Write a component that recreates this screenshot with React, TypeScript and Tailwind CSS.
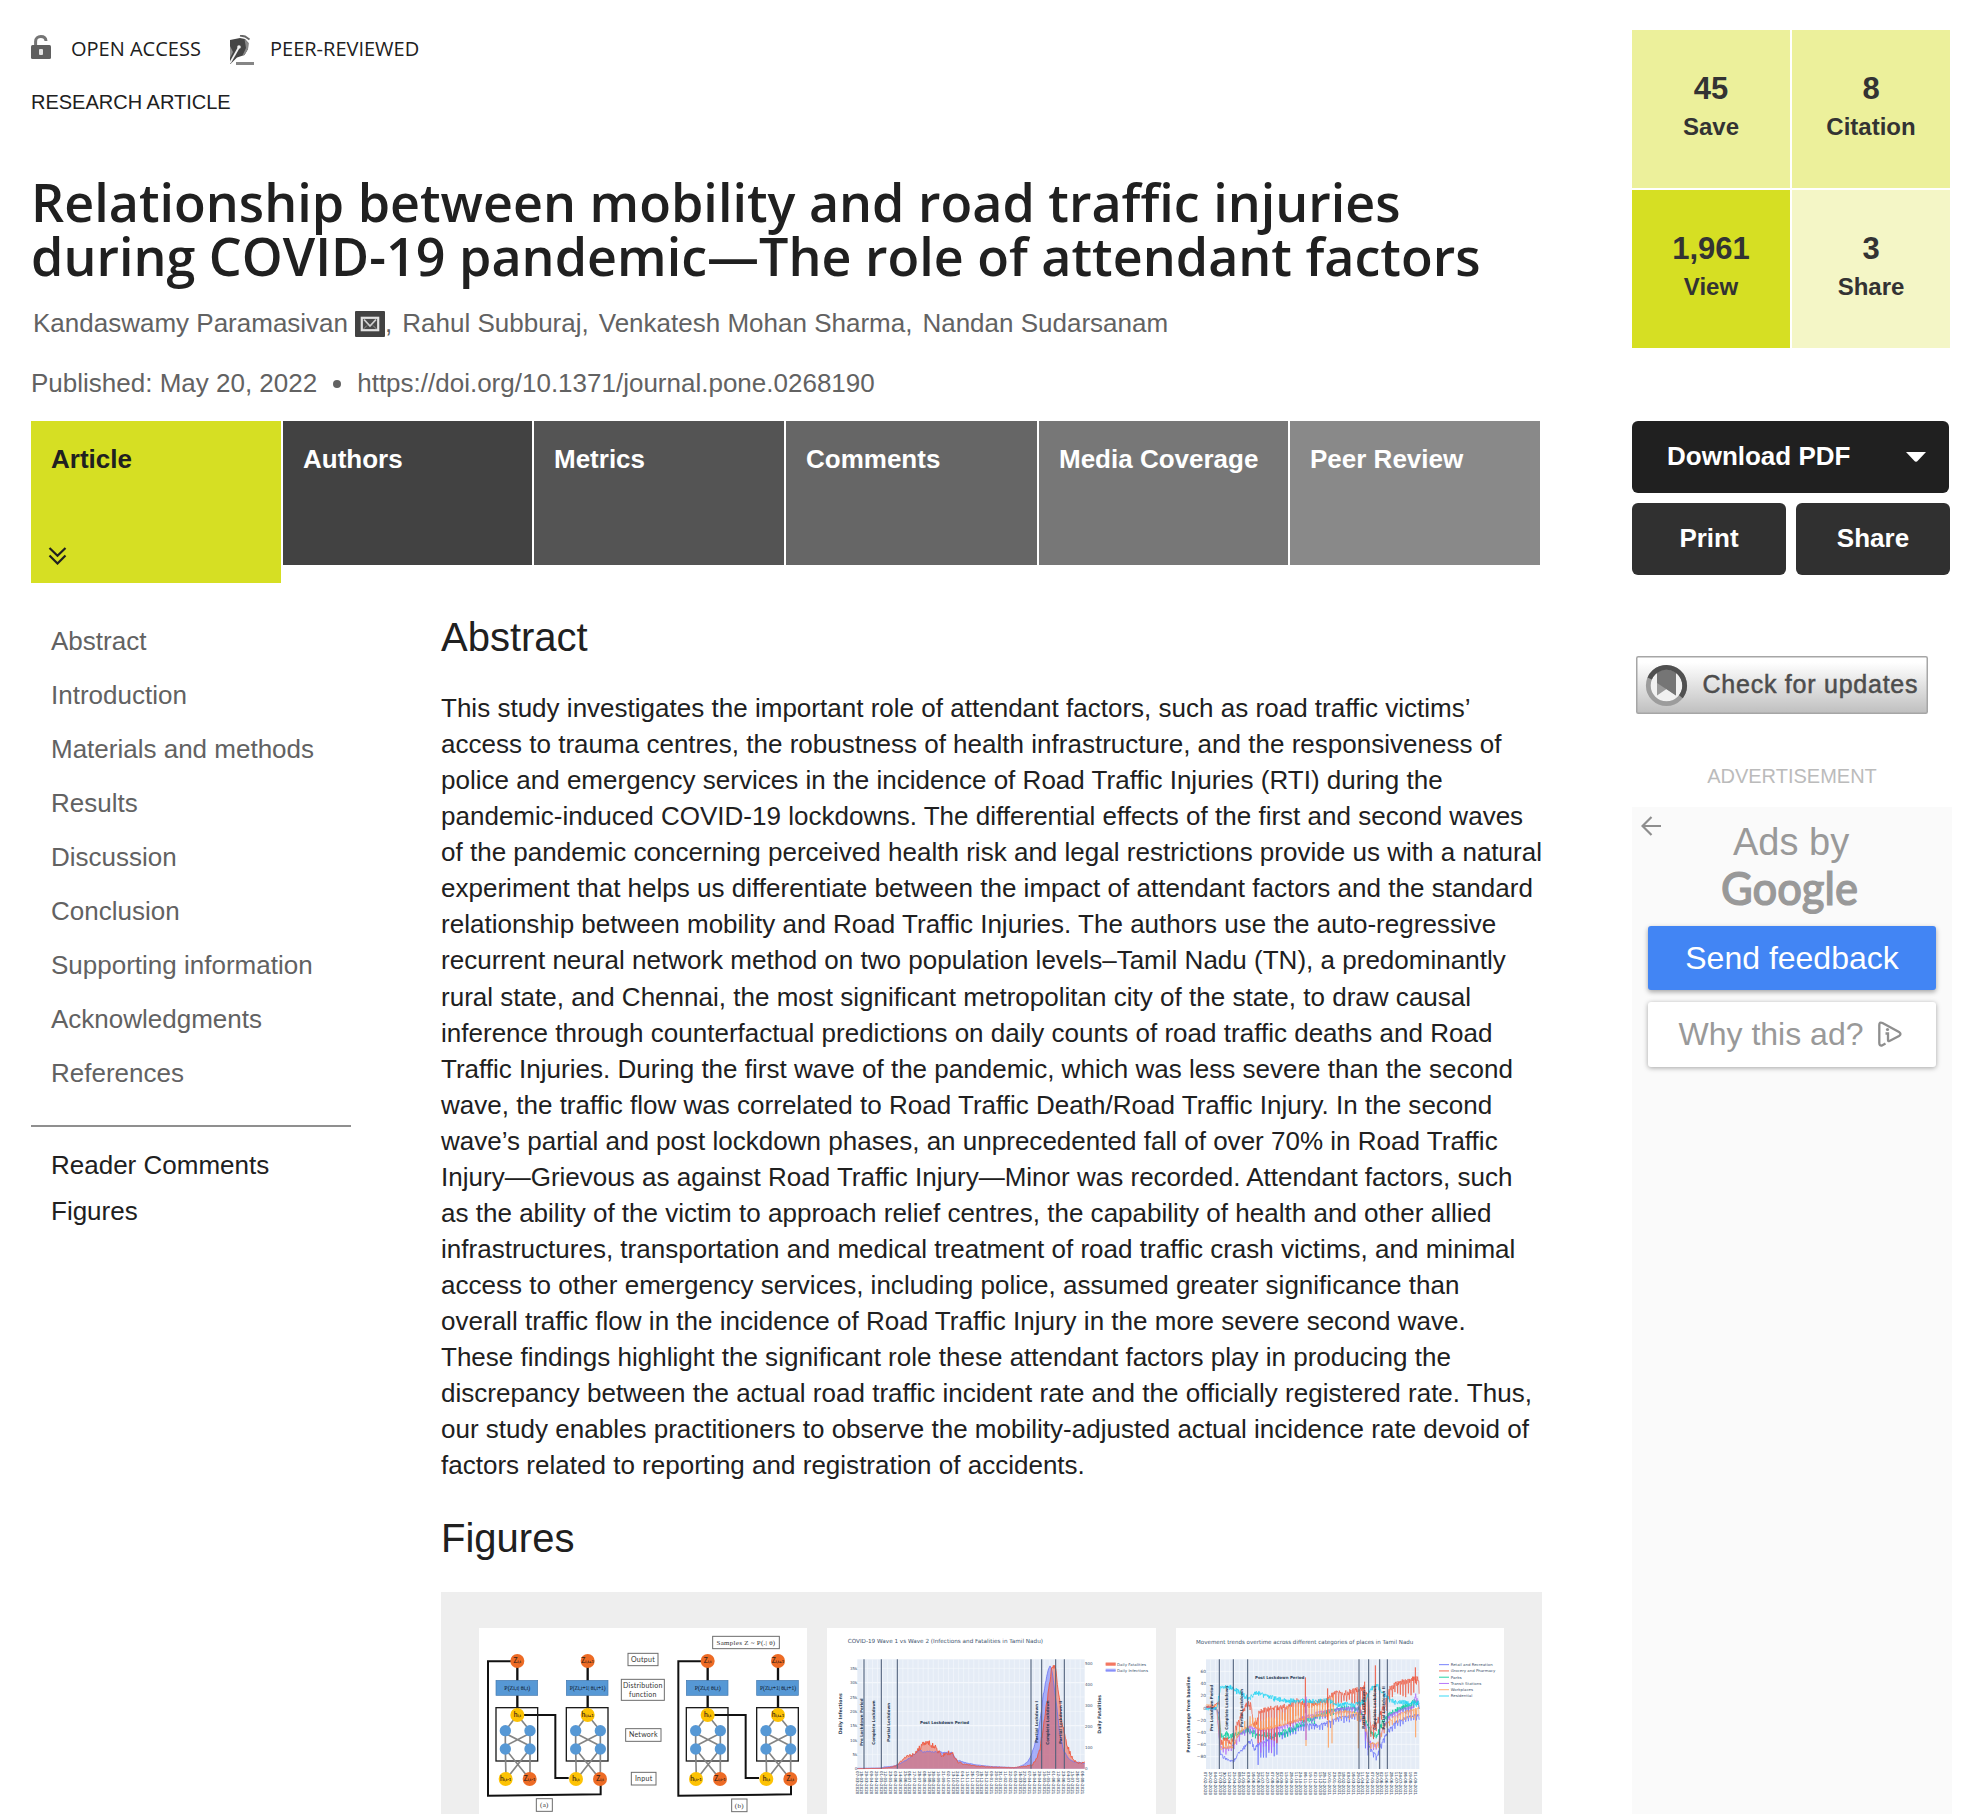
import React from "react";

type Pt = [number, number];

const SANS = "font-['Liberation_Sans',Arial,sans-serif]";

/* ---------- data ---------- */

const tabs = [
  { label: "Article", cls: "h-[162px] w-[250px] bg-[#d6df23] text-[#202020]" },
  { label: "Authors", cls: "h-[144px] w-[249px] bg-[#424242] text-white" },
  { label: "Metrics", cls: "h-[144px] w-[250px] bg-[#545454] text-white" },
  { label: "Comments", cls: "h-[144px] w-[251px] bg-[#666666] text-white" },
  { label: "Media Coverage", cls: "h-[144px] w-[249px] bg-[#777777] text-white" },
  { label: "Peer Review", cls: "h-[144px] w-[250px] bg-[#898989] text-white" },
];

const sections = [
  "Abstract",
  "Introduction",
  "Materials and methods",
  "Results",
  "Discussion",
  "Conclusion",
  "Supporting information",
  "Acknowledgments",
  "References",
];

const metrics = [
  { value: "45", label: "Save", cls: "bg-[#ecf09b]" },
  { value: "8", label: "Citation", cls: "bg-[#ecf09b]" },
  { value: "1,961", label: "View", cls: "bg-[#d6df23]" },
  { value: "3", label: "Share", cls: "bg-[#f4f6c6]" },
];

const abstractLines = [
  "This study investigates the important role of attendant factors, such as road traffic victims’",
  "access to trauma centres, the robustness of health infrastructure, and the responsiveness of",
  "police and emergency services in the incidence of Road Traffic Injuries (RTI) during the",
  "pandemic-induced COVID-19 lockdowns. The differential effects of the first and second waves",
  "of the pandemic concerning perceived health risk and legal restrictions provide us with a natural",
  "experiment that helps us differentiate between the impact of attendant factors and the standard",
  "relationship between mobility and Road Traffic Injuries. The authors use the auto-regressive",
  "recurrent neural network method on two population levels–Tamil Nadu (TN), a predominantly",
  "rural state, and Chennai, the most significant metropolitan city of the state, to draw causal",
  "inference through counterfactual predictions on daily counts of road traffic deaths and Road",
  "Traffic Injuries. During the first wave of the pandemic, which was less severe than the second",
  "wave, the traffic flow was correlated to Road Traffic Death/Road Traffic Injury. In the second",
  "wave’s partial and post lockdown phases, an unprecedented fall of over 70% in Road Traffic",
  "Injury—Grievous as against Road Traffic Injury—Minor was recorded. Attendant factors, such",
  "as the ability of the victim to approach relief centres, the capability of health and other allied",
  "infrastructures, transportation and medical treatment of road traffic crash victims, and minimal",
  "access to other emergency services, including police, assumed greater significance than",
  "overall traffic flow in the incidence of Road Traffic Injury in the more severe second wave.",
  "These findings highlight the significant role these attendant factors play in producing the",
  "discrepancy between the actual road traffic incident rate and the officially registered rate. Thus,",
  "our study enables practitioners to observe the mobility-adjusted actual incidence rate devoid of",
  "factors related to reporting and registration of accidents.",
];

/* ---------- chart helpers ---------- */

const noise = (i: number, seed: number) => {
  const v = Math.sin(i * 127.1 + seed * 311.7) * 43758.5453;
  return (v - Math.floor(v)) * 2 - 1;
};

const interp = (pts: Pt[], x: number) => {
  for (let i = 1; i < pts.length; i++) {
    if (x <= pts[i][0]) {
      const [x0, y0] = pts[i - 1];
      const [x1, y1] = pts[i];
      return y0 + ((y1 - y0) * (x - x0)) / (x1 - x0 || 1);
    }
  }
  return pts[pts.length - 1][1];
};

const range = (a: number, b: number, step: number) => {
  const out: number[] = [];
  for (let x = a; x <= b; x += step) out.push(x);
  return out;
};

const toPath = (pts: Pt[]) => pts.map(([x, y], i) => `${i ? "L" : "M"}${x.toFixed(1)} ${y.toFixed(1)}`).join("");

/* ---------- figure 1: network diagram ---------- */

function Node({ cx, cy, fill, s }: { cx: number; cy: number; fill: string; s?: string }) {
  return (
    <g>
      <circle cx={cx} cy={cy} r={s ? 21 : 17} fill={fill} />
      {s && (
        <text x={cx} y={cy + 7} fontSize="20" textAnchor="middle" fill="#3d2415" stroke="#3d2415" strokeWidth="0.4" fontFamily="Lato, sans-serif">
          {s[0]}
          <tspan fontSize="13">{s.slice(1)}</tspan>
        </text>
      )}
    </g>
  );
}

function Unit({ ox, out, dist, h, a, b }: { ox: number; out: string; dist: string; h: string; a: string; b: string }) {
  return (
    <g>
      <path d={`M${ox + 64} 245V400`} stroke="#111" strokeWidth="7" />
      <rect x={ox} y="383" width="125" height="160" fill="none" stroke="#1c1c1c" strokeWidth="4" />
      <path
        d={`M${ox + 64} 405L${ox + 28} 452M${ox + 64} 405L${ox + 102} 452M${ox + 28} 452V507L${ox + 30} 596M${ox + 102} 452V596M${ox + 28} 498L${ox + 102} 460M${ox + 28} 460L${ox + 102} 498M${ox + 28} 507L${ox + 100} 596M${ox + 102} 507L${ox + 32} 596`}
        fill="none"
        stroke="#858585"
        strokeWidth="5"
      />
      <Node cx={ox + 64} cy={243} fill="#ed6b25" s={out} />
      <rect x={ox} y="301" width="125" height="45" fill="#5698d5" stroke="#4479ae" strokeWidth="2" />
      <text x={ox + 64} y="330" fontSize="20" textAnchor="middle" textLength={dist.length > 13 ? 108 : 78} lengthAdjust="spacingAndGlyphs" fill="#14263a" stroke="#14263a" strokeWidth="0.2" fontFamily="'Liberation Serif', serif">
        {dist}
      </text>
      <Node cx={ox + 64} cy={405} fill="#fdc204" s={h} />
      <Node cx={ox + 28} cy={452} fill="#5698d5" />
      <Node cx={ox + 102} cy={452} fill="#5698d5" />
      <Node cx={ox + 28} cy={507} fill="#5698d5" />
      <Node cx={ox + 102} cy={507} fill="#5698d5" />
      <Node cx={ox + 29} cy={597} fill="#fdc204" s={a} />
      <Node cx={ox + 101} cy={597} fill="#ed6b25" s={b} />
    </g>
  );
}

function Network({ x }: { x: number }) {
  return (
    <g>
      <path d={`M${x + 64} 244H${x - 24}V647L${x + 314} 643V597`} fill="none" stroke="#111" strokeWidth="6" />
      <path d={`M${x + 64} 405H${x + 178}V594H${x + 218}`} fill="none" stroke="#111" strokeWidth="6" />
      <Unit ox={x} out="Zi,t" dist="P(Zi,t| θi,t)" h="hi,t" a="hi,t-1" b="Zi,t-1" />
      <Unit ox={x + 211} out="Zi,t+1" dist="P(Zi,t+1| θi,t+1)" h="hi,t+1" a="hi,t" b="Zi,t" />
    </g>
  );
}

function Boxed({ x, y, w, h, lines, serif }: { x: number; y: number; w: number; h: number; lines: string[]; serif?: boolean }) {
  return (
    <g>
      <rect x={x} y={y} width={w} height={h} fill="#fff" stroke="#6c6c6c" strokeWidth="3" />
      {lines.map((l, i) => (
        <text
          key={l}
          x={x + w / 2}
          y={y + h / 2 + 7 + (i - (lines.length - 1) / 2) * 28}
          fontSize="21"
          textAnchor="middle"
          fill="#333"
          fontFamily={serif ? "'Liberation Serif', serif" : "Lato, sans-serif"}
          letterSpacing="0.8"
        >
          {l}
        </text>
      ))}
    </g>
  );
}

function NetworkFigure() {
  return (
    <svg viewBox="117 144 984 558" className="block h-[186px] w-[328px] bg-white">
      <Network x={168} />
      <Network x={739} />
      <Boxed x={818} y={169} w={200} h={37} lines={["Samples  Z ~ P(.| θ)"]} serif />
      <Boxed x={564} y={220} w={90} h={37} lines={["Output"]} />
      <Boxed x={544} y={298} w={129} h={63} lines={["Distribution", "function"]} />
      <Boxed x={557} y={446} w={106} h={38} lines={["Network"]} />
      <Boxed x={574} y={577} w={74} h={38} lines={["Input"]} />
      <Boxed x={289} y={656} w={48} h={38} lines={["(a)"]} serif />
      <Boxed x={875} y={657} w={46} h={38} lines={["(b)"]} serif />
    </svg>
  );
}

/* ---------- shared plot parts ---------- */

function Tag({ x, y, size, len, children, color = "#42546e", bold, anchor = "start" }: { x: number; y: number; size: number; len?: number; children: string; color?: string; bold?: boolean; anchor?: "start" | "middle" | "end" }) {
  return (
    <text x={x} y={y} fontSize={size} textLength={len} lengthAdjust="spacingAndGlyphs" fill={color} fontWeight={bold ? 700 : 400} textAnchor={anchor} fontFamily="'DejaVu Sans', sans-serif">
      {children}
    </text>
  );
}

function VTag({ x, y, len, children, color = "#2c3d57", size = 14, bold = true }: { x: number; y: number; len: number; children: string; color?: string; size?: number; bold?: boolean }) {
  return (
    <text transform={`translate(${x} ${y}) rotate(-90)`} fontSize={size} textLength={len} lengthAdjust="spacingAndGlyphs" fill={color} fontWeight={bold ? 700 : 400} fontFamily="'DejaVu Sans', sans-serif">
      {children}
    </text>
  );
}

function DateTicks({ x0, x1, count, y, startMonth, stepDays }: { x0: number; x1: number; count: number; y: number; startMonth: number; stepDays: number }) {
  return (
    <g>
      {range(0, count - 1, 1).map((i) => {
        const d = new Date(Date.UTC(2020, startMonth, 7 + i * stepDays));
        const s = `${String(d.getUTCDate()).padStart(2, "0")}-${String(d.getUTCMonth() + 1).padStart(2, "0")}-${d.getUTCFullYear()}`;
        return (
          <text key={i} transform={`translate(${x0 + ((x1 - x0) * i) / (count - 1) - 5} ${y}) rotate(90)`} fontSize="12" textLength="70" lengthAdjust="spacingAndGlyphs" fill="#42546e" stroke="#42546e" strokeWidth="0.3" fontFamily="'DejaVu Sans', sans-serif">
            {s}
          </text>
        );
      })}
    </g>
  );
}

/* ---------- figure 2: infections and fatalities ---------- */

function WavesFigure() {
  const infKeys: Pt[] = [[142, 565], [215, 564], [222, 561], [250, 559], [270, 551], [290, 540], [310, 525], [330, 508], [340, 518], [360, 513], [380, 516], [410, 518], [425, 518], [440, 540], [470, 549], [500, 555], [550, 560], [620, 563], [640, 555], [655, 543], [665, 522], [675, 490], [685, 455], [693, 400], [700, 345], [708, 300], [714, 275], [720, 256], [727, 275], [733, 325], [740, 380], [748, 450], [760, 510], [775, 535], [790, 545], [824, 550]];
  const fatKeys: Pt[] = [[142, 566], [215, 565], [240, 562], [262, 556], [275, 540], [290, 530], [310, 524], [325, 510], [340, 492], [355, 486], [362, 496], [375, 500], [385, 515], [395, 528], [412, 518], [430, 523], [442, 545], [460, 552], [490, 557], [540, 561], [610, 563], [650, 558], [668, 554], [680, 535], [690, 505], [700, 440], [708, 385], [716, 335], [722, 285], [728, 256], [736, 258], [740, 300], [748, 350], [754, 410], [762, 455], [770, 490], [780, 520], [790, 540], [805, 549], [824, 548]];
  const line = (keys: Pt[], amp: number, seed: number): Pt[] =>
    range(142, 824, 2).map((x) => {
      const y = interp(keys, x);
      const n = noise(x, seed) * amp * Math.min(1, (566 - y) / 60);
      return [x, Math.max(256, Math.min(566, y + n))];
    });
  const inf = line(infKeys, 3, 1);
  const fat = line(fatKeys, 9, 2);
  return (
    <svg viewBox="51 144 987 558" className="block h-[186px] w-[329px] bg-white">
      <Tag x={113} y={190} size={17} len={586}>COVID-19 Wave 1 vs Wave 2 (Infections and Fatalities in Tamil Nadu)</Tag>
      <rect x="142" y="238" width="682" height="328" fill="#e5ecf6" />
      {range(157, 820, 15.2).map((x) => (
        <path key={x} d={`M${x} 238V566`} stroke="#f4f7fc" strokeWidth="2" />
      ))}
      {[265, 308, 351, 394, 437, 480, 523].map((y) => (
        <path key={y} d={`M142 ${y}H824`} stroke="#f4f7fc" strokeWidth={y === 308 || y === 437 ? 4 : 2} />
      ))}
      <path d={`${toPath(inf)}L824 566L142 566Z`} fill="#636efa" fillOpacity="0.5" />
      <path d={`${toPath(fat)}L824 566L142 566Z`} fill="#ef553b" fillOpacity="0.5" />
      <path d={toPath(inf)} fill="none" stroke="#6a74f5" strokeWidth="2.4" />
      <path d={toPath(fat)} fill="none" stroke="#ef553b" strokeWidth="2.6" />
      {[162, 214, 262, 663, 695, 737, 763].map((x) => (
        <path key={x} d={`M${x} 238V566`} stroke="#4f607a" strokeWidth="3.200" />
      ))}
      {["35k", "30k", "25k", "20k", "15k", "10k", "5k", "0"].map((s, i) => (
        <Tag key={s} x={142} y={270 + i * 43} size={12} anchor="end">{s}</Tag>
      ))}
      {["500", "400", "300", "200", "100", "0"].map((s, i) => (
        <Tag key={s} x={825} y={254 + i * 63.3} size={12}>{s}</Tag>
      ))}
      <VTag x={97} y={463} len={123}>Daily Infections</VTag>
      <VTag x={872} y={461} len={116}>Daily Fatalities</VTag>
      <VTag x={158} y={498} len={143} size={12}>Pre Lockdown Period</VTag>
      <VTag x={194} y={494} len={133} size={12}>Complete Lockdown</VTag>
      <VTag x={240} y={485} len={116} size={12}>Partial Lockdown</VTag>
      <VTag x={684} y={489} len={126} size={12}>Partial Lockdown I</VTag>
      <VTag x={717} y={494} len={133} size={12}>Complete Lockdown</VTag>
      <VTag x={755} y={492} len={130} size={12}>Partial Lockdown II</VTag>
      <Tag x={330} y={432} size={12} len={147} bold color="#2c3d57">Post Lockdown Period</Tag>
      <rect x="887" y="247" width="30" height="11" fill="#f79b8b" />
      <path d="M887 252H917" stroke="#ef553b" strokeWidth="3" />
      <rect x="887" y="266" width="30" height="10" fill="#b1b6fc" />
      <path d="M887 271H917" stroke="#8089f8" strokeWidth="3" />
      <Tag x={921} y={257} size={11} len={87}>Daily Fatalities</Tag>
      <Tag x={921} y={275} size={11} len={93}>Daily Infections</Tag>
      <DateTicks x0={142} x1={818} count={48} y={573} startMonth={2} stepDays={11} />
    </svg>
  );
}

/* ---------- figure 3: mobility trends ---------- */

type Series = { color: string; keys: Pt[]; amp: number; dip: (x: number) => number; seed: number };

function MobilityFigure() {
  const series: Series[] = [
    {
      color: "#636efa", seed: 3, amp: 5,
      keys: [[138, 384], [170, 388], [177, 400], [181, 520], [190, 530], [220, 546], [235, 520], [265, 487], [275, 480], [283, 510], [292, 495], [310, 487], [330, 475], [350, 460], [375, 462], [400, 448], [430, 435], [470, 435], [500, 428], [540, 412], [595, 405], [612, 430], [628, 500], [650, 530], [660, 500], [685, 450], [710, 425], [745, 410], [778, 405]],
      dip: (x) => (x > 290 && x < 357 ? 65 : x > 610 && x < 630 ? 70 : x < 290 ? 5 : 18),
    },
    {
      color: "#00cc96", seed: 5, amp: 8,
      keys: [[138, 382], [170, 386], [178, 420], [183, 466], [198, 458], [210, 468], [230, 460], [262, 450], [290, 460], [340, 468], [370, 455], [400, 445], [430, 425], [470, 410], [500, 395], [540, 385], [595, 385], [615, 420], [632, 455], [650, 468], [665, 430], [690, 400], [720, 385], [750, 375], [766, 360], [778, 376]],
      dip: () => 14,
    },
    {
      color: "#ab63fa", seed: 7, amp: 5,
      keys: [[138, 380], [170, 384], [180, 500], [200, 505], [220, 495], [240, 460], [270, 440], [300, 450], [350, 445], [400, 425], [450, 405], [500, 392], [550, 386], [597, 382], [612, 410], [628, 485], [652, 500], [668, 450], [690, 405], [730, 388], [760, 380], [767, 345], [778, 372]],
      dip: (x) => (x > 290 && x < 357 ? 70 : x > 610 && x < 630 ? 60 : 20),
    },
    {
      color: "#ef553b", seed: 11, amp: 9,
      keys: [[138, 380], [160, 382], [172, 368], [177, 362], [182, 490], [198, 475], [215, 490], [228, 440], [245, 405], [260, 370], [273, 376], [280, 432], [292, 425], [296, 395], [340, 385], [390, 378], [410, 362], [430, 372], [470, 368], [500, 362], [520, 342], [560, 338], [597, 328], [612, 325], [626, 360], [632, 440], [645, 440], [660, 400], [672, 380], [690, 325], [715, 310], [740, 303], [770, 295], [778, 305]],
      dip: (x) => (x > 292 && x < 355 ? 110 : x >= 355 && x < 440 ? 62 : x > 595 && x < 630 ? 75 : x > 500 ? 40 : 18),
    },
    {
      color: "#ffa15a", seed: 9, amp: 5,
      keys: [[138, 375], [170, 378], [181, 505], [220, 500], [240, 455], [275, 435], [300, 450], [345, 440], [400, 425], [450, 410], [500, 405], [550, 395], [597, 400], [612, 420], [628, 490], [655, 490], [670, 440], [690, 420], [730, 398], [778, 385]],
      dip: (x) => (x > 355 && x < 520 ? -55 : x > 250 && x <= 355 ? -35 : x > 180 && x <= 250 ? -24 : 22),
    },
    {
      color: "#19d3f3", seed: 13, amp: 7,
      keys: [[138, 388], [170, 384], [177, 350], [181, 320], [218, 322], [235, 335], [262, 352], [272, 352], [285, 338], [310, 342], [340, 354], [380, 362], [420, 362], [470, 364], [510, 360], [525, 374], [560, 372], [597, 370], [615, 362], [630, 330], [650, 313], [662, 330], [680, 350], [700, 364], [740, 368], [778, 370]],
      dip: () => 6,
    },
  ];
  const spikes: [string, number, number, number][] = [
    ["#ef553b", 436, 292, 400], ["#ffa15a", 438, 400, 498], ["#ffa15a", 505, 395, 503], ["#ef553b", 503, 325, 420],
    ["#ef553b", 646, 256, 430], ["#ffa15a", 595, 400, 505], ["#ef553b", 614, 305, 440], ["#ffa15a", 767, 390, 472],
    ["#ef553b", 766, 262, 310], ["#ffa15a", 516, 400, 490], ["#ab63fa", 438, 350, 480],
  ];
  const legend = [
    ["#636efa", "Retail and Recreation", 126], ["#ef553b", "Grocery and Pharmacy", 134], ["#00cc96", "Parks", 33],
    ["#ab63fa", "Transit Stations", 92], ["#ffa15a", "Workplaces", 67], ["#19d3f3", "Residential", 65],
  ] as const;
  return (
    <svg viewBox="48 144 984 558" className="block h-[186px] w-[328px] bg-white">
      <Tag x={108} y={191} size={17} len={652}>Movement trends overtime across different categories of places in Tamil Nadu</Tag>
      <rect x="138" y="238" width="640" height="329" fill="#e5ecf6" />
      {range(152, 775, 14.3).map((x) => (
        <path key={x} d={`M${x} 238V567`} stroke="#f4f7fc" strokeWidth="2" />
      ))}
      {[274, 311, 347, 384, 420, 457, 493, 530].map((y) => (
        <path key={y} d={`M138 ${y}H778`} stroke="#f6f9fd" strokeWidth={y === 384 ? 5 : 2.5} />
      ))}
      {series.map((s) => {
        const pts: Pt[] = [];
        range(138, 778, 1.15).forEach((x, i) => {
          const weekly = i % 7 === 3 && x > 184 ? s.dip(x) * (0.8 + 0.2 * noise(i, s.seed + 1)) : 0;
          const calm = x < 172 ? 0.5 : 1;
          pts.push([x, interp(s.keys, x) + noise(i, s.seed) * s.amp * calm + weekly]);
        });
        return <path key={s.color} d={toPath(pts)} fill="none" stroke={s.color} strokeWidth="2.200" strokeOpacity="0.9" />;
      })}
      {spikes.map(([c, x, a, b]) => (
        <path key={`${c}${x}`} d={`M${x} ${a}V${b}`} stroke={c} strokeWidth="3" />
      ))}
      {[178, 220, 263, 597, 626, 659, 682].map((x) => (
        <path key={x} d={`M${x} 238V567`} stroke="#4f607a" strokeWidth="3.200" />
      ))}
      {["60", "40", "20", "0", "−20", "−40", "−60", "−80"].map((s, i) => (
        <Tag key={s} x={138} y={279 + i * 36.5} size={13} anchor="end">{s}</Tag>
      ))}
      <VTag x={89} y={518} len={229}>Percent change from baseline</VTag>
      <VTag x={160} y={453} len={138} size={12}>Pre Lockdown Period</VTag>
      <VTag x={205} y={449} len={131} size={12}>Complete Lockdown</VTag>
      <VTag x={248} y={441} len={114} size={12}>Partial Lockdown</VTag>
      <VTag x={615} y={446} len={124} size={12}>Partial Lockdown I</VTag>
      <VTag x={648} y={449} len={131} size={12}>Complete Lockdown</VTag>
      <VTag x={676} y={449} len={130} size={12}>Partial Lockdown II</VTag>
      <Tag x={285} y={298} size={12} len={148} bold color="#2c3d57">Post Lockdown Period</Tag>
      {legend.map(([c, s, len], i) => (
        <g key={s}>
          <path d={`M837 ${254 + i * 18.8}H867`} stroke={c} strokeWidth="2.6" />
          <Tag x={872} y={258 + i * 18.8} size={11} len={len}>{s}</Tag>
        </g>
      ))}
      <DateTicks x0={138} x1={766} count={45} y={575} startMonth={1} stepDays={13} />
    </svg>
  );
}

/* ---------- icons ---------- */

function OpenLock() {
  return (
    <svg viewBox="0 0 20 24" className="h-6 w-5">
      <path d="M4.6 11V6.4C4.6 3.2 6.800 1.500 9.800 1.500S14.800 3 15 6" fill="none" stroke="#757575" strokeWidth="3" />
      <rect x="0" y="10" width="20" height="14" rx="1.5" fill="#606060" />
      <rect x="8" y="14" width="4" height="6" rx="1" fill="#e4e4e4" />
    </svg>
  );
}

function PenNib() {
  return (
    <svg viewBox="0 0 24 30" className="h-[30px] w-6">
      <path d="M10 0.5L15 1.500L19.500 4.500" stroke="#666" strokeWidth="2" fill="none" />
      <path d="M0 5L10 3L15 4L18.500 8L18 14L14.500 20L7 22.500L1 28.500L0 29Z" fill="#454545" />
      <path d="M14.500 4L18.500 8L18 14L14.500 20L12.500 20.500L16 13Z" fill="#8a8a8a" />
      <path d="M0 28L8.500 13" stroke="#f2f2f2" strokeWidth="1.800" />
      <path d="M0 11L3 17L0 23Z" fill="#8f8f8f" />
      <circle cx="9" cy="12" r="1.800" fill="#f2f2f2" />
      <rect x="6" y="27" width="18" height="3" fill="#858585" />
    </svg>
  );
}

function MailIcon() {
  return (
    <svg viewBox="0 0 30 26" className="block h-[26px] w-[30px]">
      <rect width="30" height="26" rx="1" fill="#424242" />
      <rect x="6.800" y="6.800" width="16.400" height="12.400" fill="#4a4a4a" stroke="#e2e2e2" strokeWidth="2.200" />
      <path d="M9 8.500L15 15L21 8.500" fill="none" stroke="#d0d0d0" strokeWidth="1.800" />
      <path d="M8.500 18L12 14.500M21.500 18L18 14.500" stroke="#9a9a9a" strokeWidth="1" />
    </svg>
  );
}

function CheckForUpdates() {
  return (
    <svg viewBox="0 0 292 58" className="block h-[58px] w-[292px]">
      <defs>
        <linearGradient id="cfu" x1="0" y1="0" x2="0" y2="1">
          <stop offset="0.1" stopColor="#ffffff" />
          <stop offset="1" stopColor="#bfbfbf" />
        </linearGradient>
      </defs>
      <rect x="0.75" y="0.75" width="290.500" height="56.500" rx="1.500" fill="url(#cfu)" stroke="#a6a6a6" strokeWidth="1.500" />
      <circle cx="30.500" cy="29.500" r="16" fill="#f1f1f1" />
      <path d="M21 13.500H40V39.500L30.500 33L21 39.500Z" fill="#9b9b9b" />
      <path d="M21 13.500H40V39.500L21 27Z" fill="#757575" />
      <circle cx="30.500" cy="29.500" r="18.200" fill="none" stroke="#9c9c9c" strokeWidth="4.800" />
      <path d="M13.700 22.500A18.200 18.200 0 1 1 44.900 40.700" fill="none" stroke="#505050" strokeWidth="4.800" />
      <text x="66.500" y="36.800" fontSize="25" textLength="215" fill="#4d4d4d" stroke="#4d4d4d" strokeWidth="0.500" fontFamily="'Liberation Sans', Arial, sans-serif">
        Check for updates
      </text>
    </svg>
  );
}

/* ---------- page ---------- */

function ArticleHeader() {
  return (
    <header>
      <div className="flex h-[30px] items-center font-['Open_Sans',sans-serif] text-[20px] leading-[30px] text-[#202020]">
        <span className="-mt-[5px] flex"><OpenLock /></span>
        <span className="ml-5 w-[130px] whitespace-nowrap">OPEN ACCESS</span>
        <span className="ml-[29px] mt-[2px] flex"><PenNib /></span>
        <span className="ml-4 whitespace-nowrap">PEER-REVIEWED</span>
      </div>
      <p className="mt-[26px] text-[20px] leading-6">RESEARCH ARTICLE</p>
      <h1 className="mt-[61px] whitespace-nowrap font-['Open_Sans',sans-serif] text-[52px] font-semibold leading-[54px] tracking-[0.02px]">
        Relationship between mobility and road traffic injuries
        <br />
        during COVID-19 pandemic—The role of attendant factors
      </h1>
      <div className="mt-[25px] flex h-[30px] items-center pl-[2px] text-[26px] leading-[30px] text-[#626262]">
        <span>Kandaswamy Paramasivan</span>
        <span className="ml-[7px] mt-[2px]"><MailIcon /></span>
        <span>,</span>
        <span className="ml-[10px]">Rahul Subburaj,</span>
        <span className="ml-[10px]">Venkatesh Mohan Sharma,</span>
        <span className="ml-[10px]">Nandan Sudarsanam</span>
      </div>
      <div className="mt-[30px] flex h-[30px] items-center text-[26px] leading-[30px] text-[#626262]">
        <span>Published: May 20, 2022</span>
        <span className="mx-4 mt-[2px] size-2 rounded-full bg-[#626262]" />
        <span>https://doi.org/10.1371/journal.pone.0268190</span>
      </div>
    </header>
  );
}

function Tabs() {
  return (
    <nav className="mt-[23px] flex h-[162px] items-start gap-[2px]">
      {tabs.map((t, i) => (
        <div key={t.label} className={`flex shrink-0 flex-col justify-between pt-[23px] pl-5 text-[26px] font-bold leading-[30px] whitespace-nowrap ${t.cls}`}>
          <span>{t.label}</span>
          {i === 0 && (
            <svg viewBox="0 0 18 18" className="mb-[18px] -ml-[3px] h-[18px] w-[19px]">
              <path d="M1 1L9 8.800L17 1M1 8.500L9 16.500L17 8.500" fill="none" stroke="#202020" strokeWidth="2.200" />
            </svg>
          )}
        </div>
      ))}
    </nav>
  );
}

function Sidebar() {
  return (
    <aside className="w-[320px] shrink-0 text-[26px]">
      <ul className="pl-5 text-[#626262]">
        {sections.map((s) => (
          <li key={s} className="h-[54.050px] leading-[54px]">{s}</li>
        ))}
      </ul>
      <div className="mt-[25px] h-[2px] bg-[#8f8f8f]" />
      <ul className="mt-[15px] pl-5">
        <li className="leading-[46px]">Reader Comments</li>
        <li className="leading-[46px]">Figures</li>
      </ul>
    </aside>
  );
}

function RightRail() {
  return (
    <aside className="flex w-[320px] shrink-0 flex-col pt-[30px]">
      <div className="grid w-[318px] grid-cols-2 gap-[2px] text-center font-bold text-[#333333]">
        {metrics.map((m) => (
          <div key={m.label} className={`flex h-[158px] flex-col pt-[41px] ${m.cls}`}>
            <span className="text-[31px] leading-9">{m.value}</span>
            <span className="mt-[5px] text-[24px] leading-[30px]">{m.label}</span>
          </div>
        ))}
      </div>
      <div className="mt-[73px] flex h-[72px] w-[317px] items-center justify-between rounded-md bg-[#202020] pr-[23px] pl-[35px] text-[26px] font-bold text-white">
        <span>Download PDF</span>
        <svg viewBox="0 0 20 10" className="h-[10px] w-5">
          <path d="M0 0H20L12 8.500Q10 11 8 8.500Z" fill="#fff" />
        </svg>
      </div>
      <div className="mt-[10px] grid h-[72px] w-[318px] grid-cols-2 gap-[10px] text-center text-[26px] font-bold leading-[70px] text-white">
        <span className="rounded-md bg-[#303030]">Print</span>
        <span className="rounded-md bg-[#303030]">Share</span>
      </div>
      <div className="mt-[81px] ml-1"><CheckForUpdates /></div>
      <p className="mt-[50px] text-center text-[20px] leading-6 text-[#bbbbbb]">ADVERTISEMENT</p>
      <div className="mt-[19px] h-[1010px] bg-[#fafafa]">
        <div className="flex h-[57px] pt-[9px] pl-[9px]">
          <svg viewBox="0 0 20 20" className="size-5">
            <path d="M20 10H1.500M10.500 1L1.500 10L10.500 19" fill="none" stroke="#8e8e8e" strokeWidth="2.200" />
          </svg>
          <span className="mt-[5px] ml-[72px] text-[38px] leading-[42px] text-[#999999]">Ads by</span>
        </div>
        <svg viewBox="0 0 140 52" className="ml-[89px] h-[52px] w-[140px] overflow-visible">
          <text x="0" y="40.500" fontSize="46" fontWeight="500" textLength="137" lengthAdjust="spacingAndGlyphs" fill="#999999" stroke="#999999" strokeWidth="1.200" fontFamily="Lato, sans-serif">
            Google
          </text>
        </svg>
        <div className="mx-4 mt-[10px] h-16 rounded-[3px] bg-[#4285f4] text-center text-[32px] leading-16 text-white shadow-[0_2px_5px_rgba(0,0,0,0.35)]">Send feedback</div>
        <div className="mx-4 mt-3 flex h-[65px] items-center justify-center gap-[15px] rounded-[3px] bg-white pr-[3px] text-[32px] text-[#999999] shadow-[0_1px_5px_rgba(0,0,0,0.35)]">
          <span>Why this ad?</span>
          <svg viewBox="0 0 24 26" className="h-[26px] w-6">
            <path d="M7.500 22.500L4 24.500Q1.300 25 1.300 22V4Q1.300 0.500 4.500 2L21 11Q24 13 21 15L11.500 20Q10 20.500 10 19V12.500H7.500" fill="none" stroke="#8e8e8e" strokeWidth="2.300" />
            <circle cx="9.500" cy="8.500" r="1.600" fill="#8e8e8e" />
          </svg>
        </div>
      </div>
    </aside>
  );
}

export default function App() {
  return (
    <div className={`flex h-[1814px] w-[1976px] overflow-hidden bg-white pl-[31px] text-[#202020] ${SANS}`}>
      <main className="w-[1601px] shrink-0 pt-[34px]">
        <ArticleHeader />
        <Tabs />
        <div className="mt-[31px] flex">
          <Sidebar />
          <article className="ml-[90px] w-[1101px] shrink-0">
            <h2 className="text-[40px] leading-[46px]">Abstract</h2>
            <p className="mt-[30px] whitespace-nowrap text-[26px] leading-[36.070px] tracking-[0.012px]">
              {abstractLines.map((l) => (
                <span key={l} className="block">{l}</span>
              ))}
            </p>
            <h2 className="mt-8 text-[40px] leading-[46px]">Figures</h2>
            <div className="mt-[30.500px] flex h-[240px] gap-5 bg-[#eeeeee] pt-9 pl-[38px]">
              <NetworkFigure />
              <WavesFigure />
              <MobilityFigure />
            </div>
          </article>
        </div>
      </main>
      <RightRail />
    </div>
  );
}
